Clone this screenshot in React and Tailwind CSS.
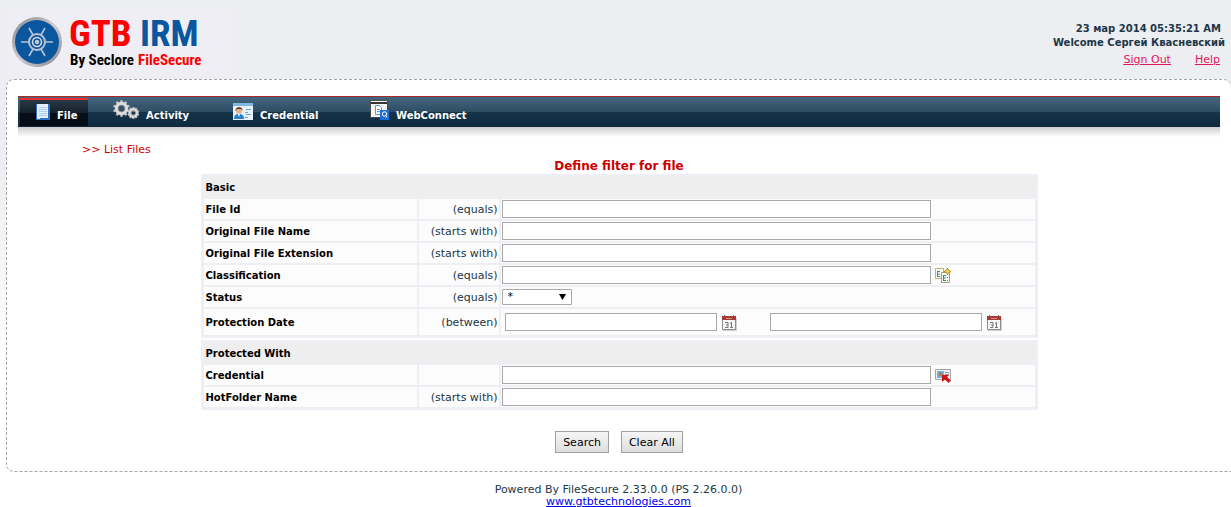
import React from 'react';

const tabs = [
    { name: 'File', icon: FileIcon, active: true },
    { name: 'Activity', icon: GearsIcon },
    { name: 'Credential', icon: CardIcon },
    { name: 'WebConnect', icon: WebIcon },
];

const tabClasses = {
    File: 'w-[68px] pl-4 bg-[linear-gradient(#2a3946,#14202b_50%,#080f17_50%,#050b12)] border-t-2 border-[#e62e2e]',
    Activity: 'ml-[25px] w-24 border-t-2 border-transparent',
    Credential: 'ml-6 w-[113px] border-t-2 border-transparent',
    WebConnect: 'ml-6 w-[120px] border-t-2 border-transparent',
};

function FileIcon() {
    return (
        <svg className="mt-1" width="14" height="16" viewBox="0 0 14 16">
            <path d="M0 0h14v16H0z" fill="#2f6fc4" />
            <path d="M1 0h11v14H1z" fill="#e4f1fd" />
            <path d="M3 3.500h8M3 5.500h8M3 7.500h8M3 9.500h8M3 11.500h8" stroke="#a9cdf0" />
            <path d="M1 14h3v1H1z" fill="#dbe9f8" />
        </svg>
    );
}

function Gear({ x, y, r }) {
    const teeth = [0, 36, 72, 108, 144, 180, 216, 252, 288, 324];
    return (
        <g transform={`translate(${x} ${y})`}>
            {teeth.map((a) => (
                <rect key={a} x="-1.2" y={-r} width="2.4" height="4" fill="#c4c4c4" transform={`rotate(${a})`} />
            ))}
            <circle r={r * 0.6} fill="none" stroke="#dcdcdc" strokeWidth={r * 0.42} />
            <circle r={r * 0.4} fill="none" stroke="#858585" strokeWidth="0.8" />
        </g>
    );
}

function GearsIcon() {
    return (
        <svg width="26" height="20" viewBox="0 0 26 20">
            <Gear x={8.5} y={8.5} r={8.3} />
            <Gear x={20.3} y={13} r={5.8} />
        </svg>
    );
}

function CardIcon() {
    return (
        <svg className="mt-[3px]" width="20" height="17" viewBox="0 0 20 17">
            <path d="M0 0h20v17H0z" fill="#e9f1f6" />
            <path d="M0 0h20v3H0z" fill="#7fb9de" />
            <path d="M1 16c0-4 2-5 5-5s5 1 5 5z" fill="#2583cb" />
            <path d="M5 11h2l-1 3z" fill="#fff" />
            <circle cx="6" cy="7.500" r="3.200" fill="#e3b48c" />
            <path d="M2.500 8c-.5-5 7-5 7-.5L8 6 4 6z" fill="#4a3428" />
            <path d="M13 6.500h5M12 9.500h3M13 11.500h5M12 14.500h3" stroke="#5aa9dd" />
        </svg>
    );
}

function WebIcon() {
    return (
        <svg width="19" height="20" viewBox="0 0 19 20">
            <path d="M.5.500h17v17H.500z" fill="#f4f4f4" stroke="#4b4b4b" />
            <path d="M1 1h16v1H1z" fill="#fff" />
            <path d="M1 2h16v2H1z" fill="#3a3230" />
            <path d="M5.500 5.500h4l2 2v7h-6z" fill="#fff" stroke="#5b9bd3" />
            <path d="M7 9.500h3M7 11.500h3" stroke="#5b9bd3" />
            <path d="M10 10h9v10h-9z" fill="#1f6fd6" />
            <circle cx="14.500" cy="14" r="2.200" fill="none" stroke="#fff" />
            <path d="M16 15.500l1 2" stroke="#fff" />
        </svg>
    );
}

function CalendarIcon() {
    return (
        <svg width="16" height="16" viewBox="0 0 16 16">
            <path d="M2 3h14v13H2z" fill="#cfcfcf" />
            <path d="M1.500 2.500h13v12h-13z" fill="#f7f7f7" stroke="#8d8d8d" />
            <path d="M1 1h14v4H1z" fill="#a83a38" />
            <path d="M5 3.500h6" stroke="#d98a80" />
            <path d="M3.500 0v2M12.500 0v2" stroke="#666" />
            <path d="M4 7.500h3v5H4M5 10h2M9 8.500l1.500-1v5M9 12.500h3" fill="none" stroke="#777" />
        </svg>
    );
}

function ClassificationIcon() {
    return (
        <svg width="16" height="16" viewBox="0 0 16 16">
            <path d="M.5.500h8v10h-8z" fill="#f7fbf5" stroke="#c3b06a" />
            <path d="M2.500 3v6M2 3.500h3M3 6h2M2 8.500h3" stroke="#3d9a68" fill="none" />
            <path d="M6.500 4.500h8v10h-8z" fill="#fff" stroke="#a3a078" />
            <path d="M8.500 7v6M8 7.500h3M9 10h2M8 12.500h3" stroke="#2d9365" fill="none" />
            <path d="M12 9.500h1M12 12.500h1" stroke="#4a7c9a" />
            <path d="M12.500 0l1.200 2.300L16 3.500l-2.300 1.200L12.500 7l-1.200-2.300L9 3.500l2.300-1.200z" fill="#f4d35a" stroke="#a87d12" strokeWidth="0.8" />
        </svg>
    );
}

function PickCredentialIcon() {
    return (
        <svg width="16" height="14" viewBox="0 0 16 14">
            <path d="M.5.500h15v10H.500z" fill="#eef1f3" stroke="#a5a5a5" />
            <path d="M2 2h7v7H2z" fill="#6fb0e6" />
            <circle cx="5.500" cy="5" r="2" fill="#b07a4e" />
            <path d="M10 3.500h4M10 5.500h4" stroke="#8f9aa3" />
            <path d="M7 6h7l-2 2 4 3.500-2.500 2.500L10 10.500l-3 2.500z" fill="#cc1414" />
        </svg>
    );
}

function Emblem() {
    return (
        <svg width="50" height="50" viewBox="0 0 50 50">
            <defs>
                <linearGradient id="ring" x1="0" y1="0" x2="1" y2="1">
                    <stop offset="0" stopColor="#85858c" />
                    <stop offset="0.5" stopColor="#cfccd0" />
                    <stop offset="1" stopColor="#85858c" />
                </linearGradient>
            </defs>
            <circle cx="25" cy="25" r="25" fill="url(#ring)" />
            <circle cx="25" cy="25" r="22" fill="#0a569f" />
            <g stroke="#b9c3d2" strokeWidth="1.6" fill="none">
                <path d="M9 25h8M33 25h8M17 11l4 7M33 11l-4 7M17 39l4-7M33 39l-4-7" />
                <circle cx="25" cy="25" r="8" strokeWidth="2" />
                <circle cx="25" cy="25" r="4.500" stroke="#d5d8df" />
                <circle cx="25" cy="25" r="1.500" fill="#d5d8df" />
            </g>
        </svg>
    );
}

function Logo() {
    return (
        <svg width="200" height="64" viewBox="0 -5 200 64" role="img" aria-label="GTB IRM By Seclore FileSecure">
            <Emblem />
            <g fontFamily="'Roboto Condensed', Roboto, sans-serif" fontWeight="700">
                <text x="57" y="29" fontSize="37" fill="#fe0000">GTB</text>
                <text x="128" y="29" fontSize="37" fill="#0a569f">IRM</text>
                <text x="58" y="48" fontSize="15" fill="#000">By Seclore</text>
                <text x="126" y="48" fontSize="15" fill="#fe0000">FileSecure</text>
            </g>
        </svg>
    );
}

function Row({ id, label, match, children, tall }) {
    return (
        <tr className={tall ? 'h-[26px]' : 'h-5'}>
            <th scope="row" className="bg-[#fcfcfc] pl-[2px] pt-[2px] text-left text-[10px] font-bold text-black">
                <label htmlFor={id}>{label}</label>
            </th>
            <td className="bg-[#fcfcfc] pr-px pt-px text-right">{match}</td>
            <td className="bg-[#fcfcfc] pl-px">
                <div className="flex items-center">{children}</div>
            </td>
        </tr>
    );
}

function TextField({ id }) {
    return <input id={id} type="text" className="h-[18px] w-[429px] border border-[#a9a9a9] bg-white px-1" />;
}

function IconButton({ label, children }) {
    return <button type="button" aria-label={label} className="ml-1 mt-[2px]">{children}</button>;
}

function Section({ title, children }) {
    return (
        <table className="w-full table-fixed border-separate border-spacing-[2px] border border-[#eeeef5] bg-[#eeeef5]">
            <colgroup>
                <col className="w-[213px]" />
                <col className="w-20" />
                <col />
            </colgroup>
            <tbody>
                <tr className="h-5">
                    <th colSpan="3" className="bg-[#eee] pl-[2px] pt-[2px] text-left text-[10px] font-bold text-black">{title}</th>
                </tr>
                {children}
            </tbody>
        </table>
    );
}

export default function App() {
    return (
        <div className="bg-white font-['DejaVu_Sans',sans-serif] text-[11px] leading-3 text-[#1c3748]">
            <div className="bg-gradient-to-b from-[#eceef1] from-35% to-white to-80%">
                <header className="flex h-[79px] justify-between pr-[6px]">
                    <div className="ml-2 mt-3 h-16 w-[226px] bg-[#eeeef4] pl-1">
                        <Logo />
                    </div>
                    <div className="pt-[22px] text-right">
                        <div className="pr-1 text-[10px] font-bold leading-[14px]">23 мар 2014 05:35:21 AM</div>
                        <div className="text-[10px] font-bold leading-[14px]">Welcome Сергей Квасневский</div>
                        <div className="flex justify-end gap-6 pr-[5px] pt-1 text-[#e0185e] underline">
                            <a href="#signout">Sign Out</a>
                            <a href="#help">Help</a>
                        </div>
                    </div>
                </header>

                <main className="ml-[6px] rounded-l-lg rounded-tr-lg border border-r-0 border-dashed border-[#a6a6aa] bg-white pt-4">
                    <nav className="mx-[11px] flex h-[31px] border-t border-[#a52a2a] bg-[linear-gradient(#44677f,#2c4c61_50%,#14344a_50%,#0f2a3e)] py-px pl-[2px] text-[10px] font-bold text-white">
                        {tabs.map(({ name, icon: Icon, active }) => (
                            <a
                                key={name}
                                href={`#${name}`}
                                aria-current={active ? 'page' : undefined}
                                className={`flex items-start gap-[7px] ${tabClasses[name]}`}
                            >
                                <Icon />
                                <span className="pt-[10px]">{name}</span>
                            </a>
                        ))}
                    </nav>
                    <div className="mx-[11px] h-[10px] bg-gradient-to-b from-[#d0cccf] to-white" />

                    <div className="pl-[75px] pt-[7px] text-[#d40000]">&gt;&gt; List Files</div>

                    <form className="mx-auto w-[837px]">
                        <h1 className="pb-px pt-[3px] text-center text-[12px] font-bold leading-[14px] text-[#c00]">Define filter for file</h1>
                        <Section title="Basic">
                            <Row id="fileId" label="File Id" match="(equals)"><TextField id="fileId" /></Row>
                            <Row id="fileName" label="Original File Name" match="(starts with)"><TextField id="fileName" /></Row>
                            <Row id="fileExt" label="Original File Extension" match="(starts with)"><TextField id="fileExt" /></Row>
                            <Row id="classification" label="Classification" match="(equals)">
                                <TextField id="classification" />
                                <IconButton label="Choose classification"><ClassificationIcon /></IconButton>
                            </Row>
                            <Row id="status" label="Status" match="(equals)">
                                <div className="relative flex">
                                    <select id="status" className="h-4 w-[70px] appearance-none rounded-[1px] border border-[#a9a9a9] bg-white pl-[5px] text-black">
                                        <option>*</option>
                                    </select>
                                    <svg className="pointer-events-none absolute right-[6px] top-[5px]" width="7" height="6" viewBox="0 0 7 6">
                                        <path d="M0 0h7L3.500 6z" fill="#000" />
                                    </svg>
                                </div>
                            </Row>
                            <Row id="dateFrom" label="Protection Date" match="(between)" tall>
                                <input id="dateFrom" type="text" className="ml-[3px] h-[18px] w-[212px] border border-[#a9a9a9] bg-white px-1" />
                                <IconButton label="Pick start date"><CalendarIcon /></IconButton>
                                <input aria-label="End date" type="text" className="ml-[33px] h-[18px] w-[212px] border border-[#a9a9a9] bg-white px-1" />
                                <IconButton label="Pick end date"><CalendarIcon /></IconButton>
                            </Row>
                        </Section>
                        <div className="h-[2px]" />
                        <Section title="Protected With">
                            <Row id="credential" label="Credential">
                                <TextField id="credential" />
                                <IconButton label="Choose credential"><PickCredentialIcon /></IconButton>
                            </Row>
                            <Row id="hotFolder" label="HotFolder Name" match="(starts with)"><TextField id="hotFolder" /></Row>
                        </Section>
                        <div className="flex justify-center gap-3 pb-[18px] pt-[21px] text-black">
                            <button type="submit" className="h-[22px] border border-[#a0a0a0] bg-gradient-to-b from-[#f6f6f6] to-[#dedede] px-[7px] pt-[2px]">Search</button>
                            <button type="reset" className="h-[22px] border border-[#a0a0a0] bg-gradient-to-b from-[#f6f6f6] to-[#dedede] px-[7px] pt-[2px]">Clear All</button>
                        </div>
                    </form>
                </main>
            </div>

            <footer className="ml-[6px] pt-3 text-center">
                <div>Powered By FileSecure 2.33.0.0 (PS 2.26.0.0)</div>
                <a href="#gtb" className="text-[#0000ee] underline">www.gtbtechnologies.com</a>
            </footer>
        </div>
    );
}
